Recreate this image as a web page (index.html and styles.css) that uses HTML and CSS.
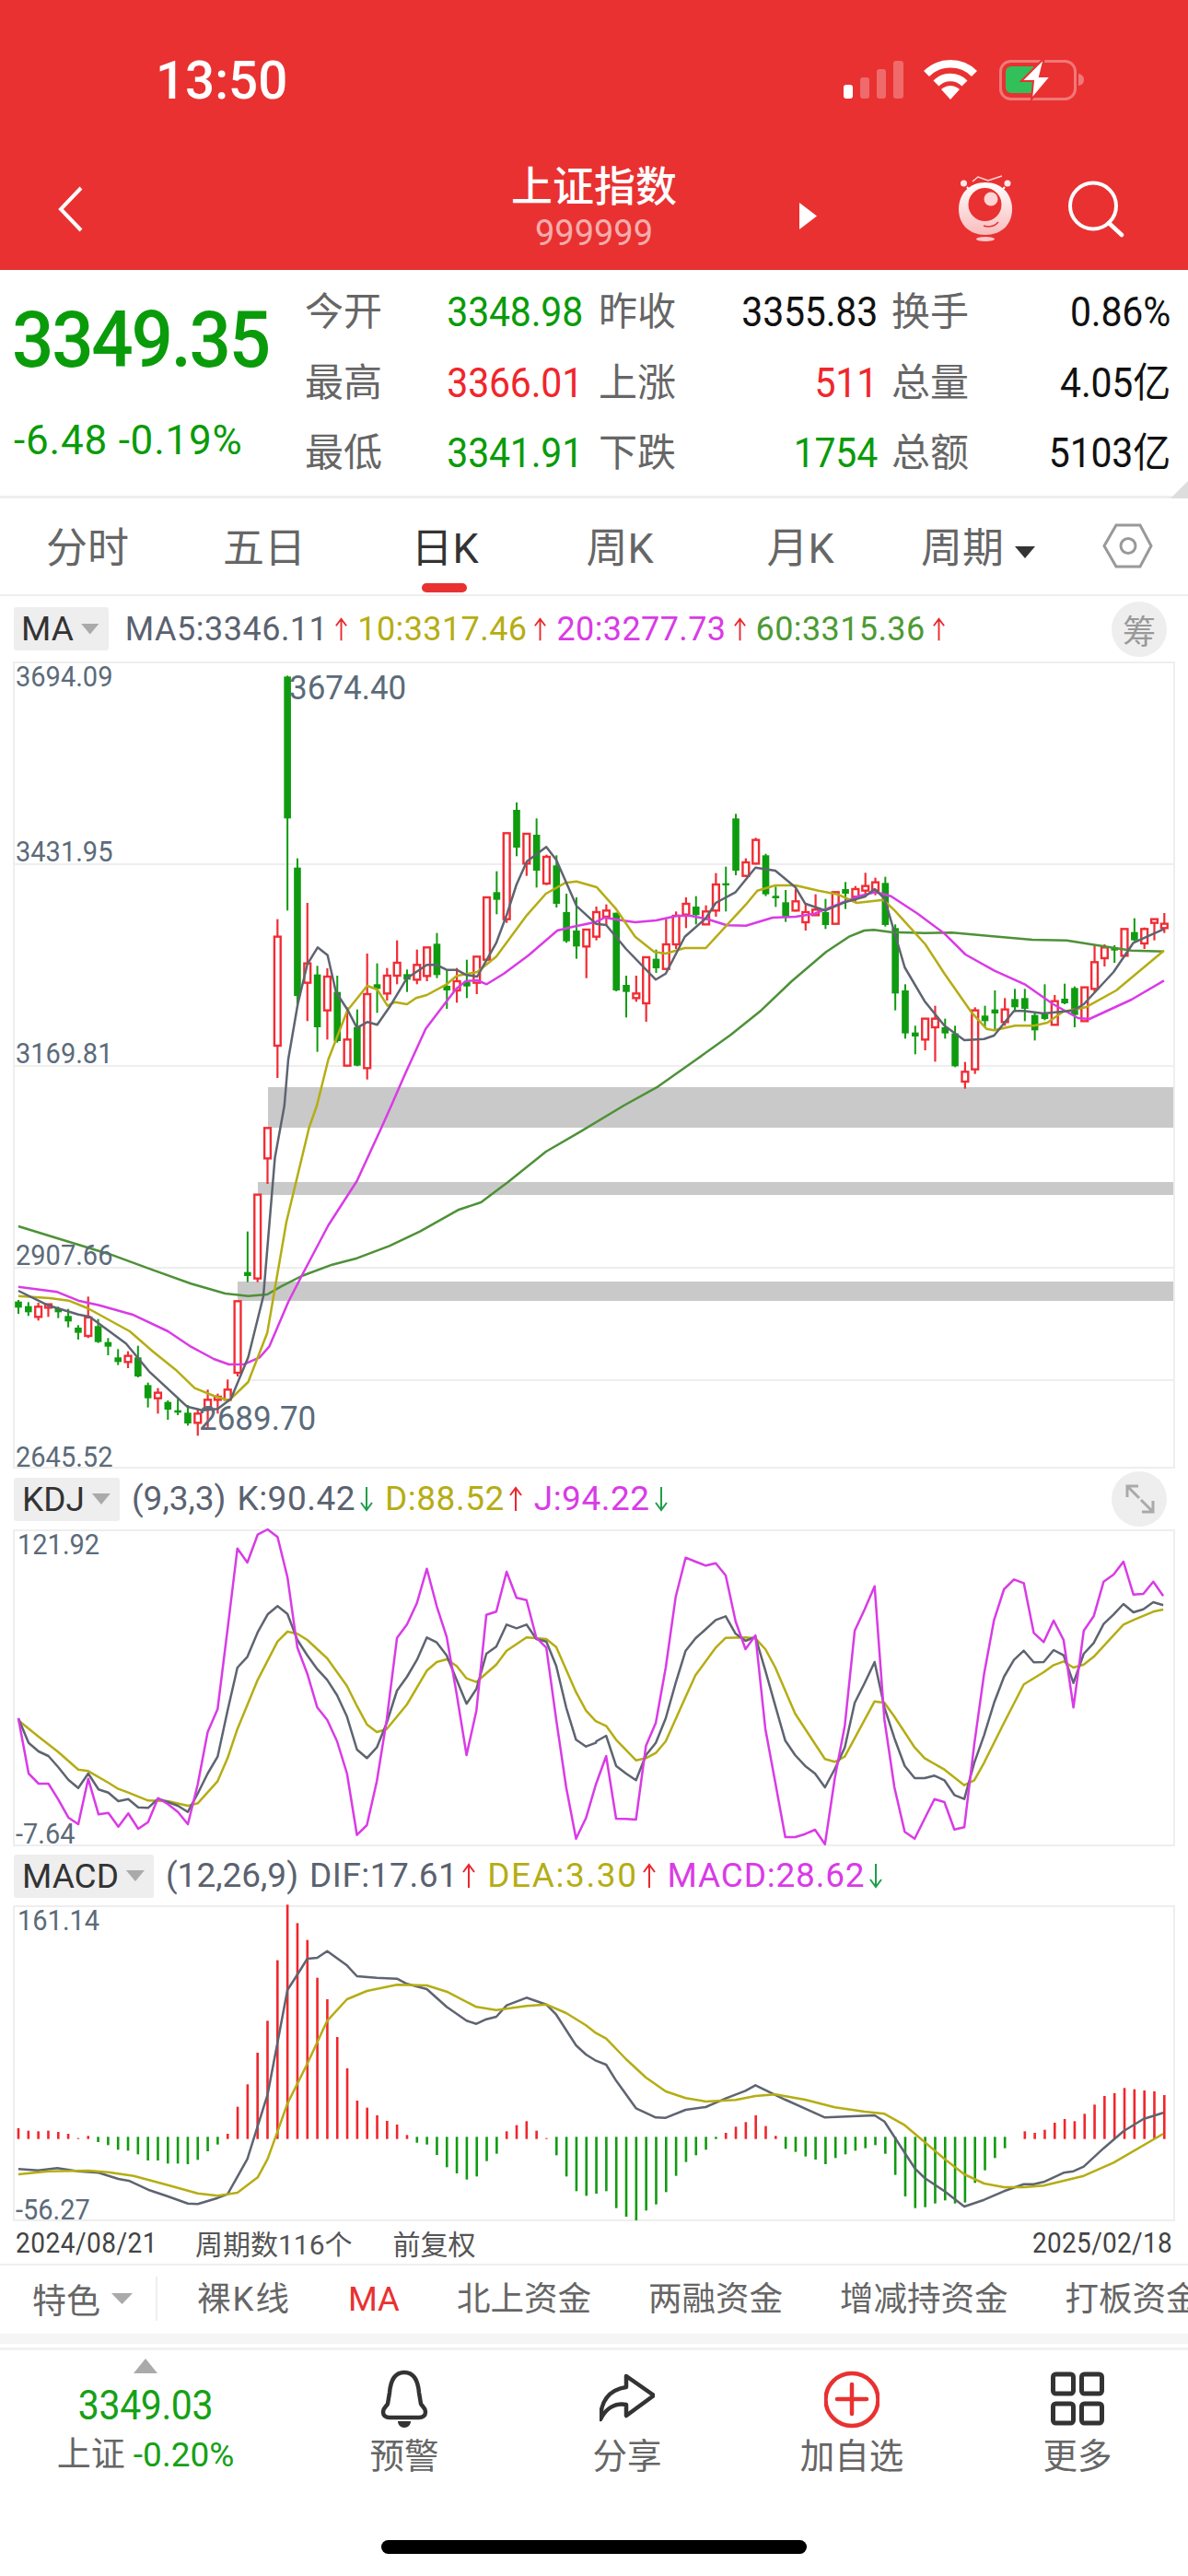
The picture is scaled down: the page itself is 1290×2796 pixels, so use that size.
FILE: index.html
```html
<!DOCTYPE html>
<html lang="zh">
<head>
<meta charset="utf-8">
<title>上证指数</title>
<link rel="stylesheet" href="styles.css">
</head>
<body>
<svg class="defs" width="0" height="0">
  <symbol id="arr-up" viewBox="0 0 16 28"><path d="M8 27V2M2 10l6-8 6 8" fill="none" stroke="#e9282e" stroke-width="2"/></symbol>
  <symbol id="arr-down" viewBox="0 0 16 28"><path d="M8 1v25M2 18l6 8 6-8" fill="none" stroke="#1f9e4a" stroke-width="2"/></symbol>
</svg>
<div class="page">
<header class="header">
  <div class="statusbar">
    <span class="time">13:50</span>
    <svg class="status-icons" viewBox="910 60 270 52" width="270" height="52">
      <rect x="916" y="92" width="10" height="15" rx="3" fill="#fff"/>
      <rect x="934" y="84" width="10" height="23" rx="3" fill="#fff" opacity=".28"/>
      <rect x="952" y="75" width="10" height="32" rx="3" fill="#fff" opacity=".28"/>
      <rect x="970" y="66" width="11" height="41" rx="3" fill="#fff" opacity=".28"/>
      <path d="M1006 80a37 37 0 0 1 52 0M1016.5 90.5a22 22 0 0 1 31 0" fill="none" stroke="#fff" stroke-width="8.5"/>
      <path d="M1022 97q10-8 20 0l-10 11z" fill="#fff"/>
      <rect x="1086.5" y="66.5" width="81" height="41" rx="11" fill="none" stroke="#fff" stroke-opacity=".35" stroke-width="3"/>
      <path d="M1171 80q6 1 6 6.5t-6 6.5z" fill="#fff" fill-opacity=".35"/>
      <path d="M1092 78a6 6 0 0 1 6-6h24v29h-24a6 6 0 0 1-6-6z" fill="#32c05a"/>
      <path d="M1134 63l-25 25h13l-2 20 21-25h-12z" fill="#fff" stroke="#e93131" stroke-width="2"/>
    </svg>
  </div>
  <nav class="navbar">
    <svg class="back" viewBox="60 198 34 58" width="34" height="58"><path d="M88 204L66 227l22 23" fill="none" stroke="#fff" stroke-width="4"/></svg>
    <div class="title-block">
      <div class="title">上证指数</div>
      <div class="code">999999</div>
    </div>
    <span class="next"></span>
    <svg class="mascot" viewBox="1038 188 64 76" width="64" height="76">
      <defs><linearGradient id="egg" x1="0" y1="0" x2="0" y2="1"><stop offset="0" stop-color="#fff"/><stop offset="1" stop-color="#f8bcbc"/></linearGradient></defs>
      <path d="M1056 197l6-5 11 4 15-5" fill="none" stroke="#ffd9d9" stroke-width="1.5"/>
      <path d="M1050 203l6 7M1091 203l-6 7" stroke="#fff" stroke-width="2"/>
      <circle cx="1046.5" cy="199" r="3.5" fill="#ffe6e6"/><circle cx="1094" cy="199" r="3.5" fill="#ffe6e6"/>
      <path d="M1070 198c18 0 29 13 29 29 0 17-12 28-29 28s-29-11-29-28c0-16 11-29 29-29z" fill="url(#egg)"/>
      <circle cx="1069.5" cy="222" r="18" fill="#e93131"/>
      <circle cx="1076" cy="216" r="7.5" fill="#ffd4d4"/>
      <path d="M1068 245q10 3 16-4" fill="none" stroke="#e93131" stroke-width="1.5"/>
      <ellipse cx="1070" cy="259.5" rx="10" ry="2.5" fill="#f9c7c7"/>
    </svg>
    <svg class="search" viewBox="1155 192 70 68" width="70" height="68"><circle cx="1187" cy="223.5" r="25" fill="none" stroke="#fff" stroke-width="4"/><path d="M1204 242l14 13" stroke="#fff" stroke-width="4.5" stroke-linecap="round"/></svg>
  </nav>
</header>

<section class="quote">
  <div class="quote-main">
    <div class="price">3349.35</div>
    <div class="change">-6.48 -0.19%</div>
  </div>
  <div class="quote-grid">
    <span class="lbl">今开</span><span class="val green">3348.98</span>
    <span class="lbl">昨收</span><span class="val black">3355.83</span>
    <span class="lbl">换手</span><span class="val black">0.86%</span>
    <span class="lbl">最高</span><span class="val red">3366.01</span>
    <span class="lbl">上涨</span><span class="val red">511</span>
    <span class="lbl">总量</span><span class="val black">4.05亿</span>
    <span class="lbl">最低</span><span class="val green">3341.91</span>
    <span class="lbl">下跌</span><span class="val green">1754</span>
    <span class="lbl">总额</span><span class="val black">5103亿</span>
  </div>
  <span class="corner"></span>
</section>

<div class="tabs">
  <span class="tab">分时</span>
  <span class="tab">五日</span>
  <span class="tab active">日K</span>
  <span class="tab">周K</span>
  <span class="tab">月K</span>
  <span class="tab tab-more">周期<i class="caret dark"></i></span>
  <svg class="hex" viewBox="1197 568 56 52" width="56" height="52"><path d="M1199 593.5l13-22.5h26l12 22.5-12 22.5h-26z" fill="none" stroke="#999" stroke-width="3"/><circle cx="1225" cy="593.5" r="8" fill="none" stroke="#999" stroke-width="3"/></svg>
</div>

<div class="legend legend-ma">
  <span class="pick">MA<i class="caret"></i></span>
  <span class="item c-gray">MA5:3346.11</span><svg class="arr"><use href="#arr-up"/></svg>
  <span class="item c-olive">10:3317.46</span><svg class="arr"><use href="#arr-up"/></svg>
  <span class="item c-mag">20:3277.73</span><svg class="arr"><use href="#arr-up"/></svg>
  <span class="item c-green">60:3315.36</span><svg class="arr"><use href="#arr-up"/></svg>
  <span class="round">筹</span>
</div>
<div class="plot plot-main" id="main">
  <span class="yl a1">3694.09</span>
  <span class="yl a2">3431.95</span>
  <span class="yl a3">3169.81</span>
  <span class="yl a4">2907.66</span>
  <span class="yl a5">2645.52</span>
  <span class="mark m1">3674.40</span>
  <span class="mark m2">2689.70</span>
</div>

<div class="legend legend-kdj">
  <span class="pick">KDJ<i class="caret"></i></span>
  <span class="item param c-gray">(9,3,3)</span>
  <span class="item c-gray gap">K:90.42</span><svg class="arr"><use href="#arr-down"/></svg>
  <span class="item c-olive">D:88.52</span><svg class="arr"><use href="#arr-up"/></svg>
  <span class="item c-mag">J:94.22</span><svg class="arr"><use href="#arr-down"/></svg>
  <span class="round"><svg viewBox="1206 1600 60 57" width="60" height="57"><path d="M1223 1626v-12h12M1224 1615l12 12M1251 1630v12h-12M1250 1641l-12-12" fill="none" stroke="#aaa" stroke-width="3"/></svg></span>
</div>
<div class="plot plot-kdj" id="kdj">
  <span class="yl b1">121.92</span>
  <span class="yl b2">-7.64</span>
</div>

<div class="legend legend-macd">
  <span class="pick">MACD<i class="caret"></i></span>
  <span class="item param c-gray">(12,26,9)</span>
  <span class="item c-gray gap">DIF:17.61</span><svg class="arr"><use href="#arr-up"/></svg>
  <span class="item c-olive">DEA:3.30</span><svg class="arr"><use href="#arr-up"/></svg>
  <span class="item c-mag">MACD:28.62</span><svg class="arr"><use href="#arr-down"/></svg>
</div>
<div class="plot plot-macd" id="macd">
  <span class="yl b1">161.14</span>
  <span class="yl b2">-56.27</span>
</div>

<div class="dates">
  <span class="date-start">2024/08/21</span>
  <span class="count">周期数116个</span>
  <span class="adj">前复权</span>
  <span class="date-end">2025/02/18</span>
</div>

<div class="tools">
  <span class="feature">特色<i class="caret"></i></span>
  <span class="tool-list">
    <span class="tool wide">裸K线</span>
    <span class="tool on">MA</span>
    <span class="tool">北上资金</span>
    <span class="tool">两融资金</span>
    <span class="tool">增减持资金</span>
    <span class="tool">打板资金</span>
  </span>
</div>
<div class="strip"></div>

<footer class="bottom">
  <div class="bottom-grid">
    <div class="ticker">
      <i class="up"></i>
      <div class="ticker-val">3349.03</div>
      <div class="ticker-label">上证 <b>-0.20%</b></div>
    </div>
    <div class="action">
      <svg viewBox="409 2570 60 70" width="60" height="70"><path d="M439 2575c-11 0-15 10-16 22l-2 12c-1 3-5 4-5 9 0 4 3 6 7 6h32c4 0 7-2 7-6 0-5-4-6-5-9l-2-12c-1-12-5-22-16-22z" fill="none" stroke="#333" stroke-width="4.5"/><path d="M432 2628h14c0 4-3 7-7 7s-7-3-7-7z" fill="#333"/></svg>
      <span>预警</span>
    </div>
    <div class="action">
      <svg viewBox="651 2570 60 70" width="60" height="70"><path d="M680 2579l30 21-30 22v-12c-12-2-22 4-28 16 0-18 8-32 28-35z" fill="none" stroke="#333" stroke-width="4.5" stroke-linejoin="round"/></svg>
      <span>分享</span>
    </div>
    <div class="action">
      <svg viewBox="895 2570 60 70" width="60" height="70"><circle cx="925" cy="2604.5" r="28.5" fill="none" stroke="#e93131" stroke-width="4.5"/><path d="M909 2604h32M925 2588v32" stroke="#e93131" stroke-width="4.5" stroke-linecap="round"/></svg>
      <span>加自选</span>
    </div>
    <div class="action">
      <svg viewBox="1138 2570 60 70" width="60" height="70"><g fill="none" stroke="#333" stroke-width="5"><rect x="1141.5" y="2577" width="22" height="21" rx="3"/><rect x="1172.5" y="2577" width="22" height="21" rx="3"/><rect x="1141.5" y="2609" width="22" height="21" rx="3"/><rect x="1172.5" y="2609" width="22" height="21" rx="3"/></g></svg>
      <span>更多</span>
    </div>
  </div>
  <div class="home"></div>
</footer>
</div>
<script src="chart.js"></script>
</body>
</html>
```
FILE: styles.css
```css
* { box-sizing: border-box; }
html, body { margin: 0; padding: 0; background: #fff; }
body { font-family: Roboto, "Noto Sans CJK SC", sans-serif; }
.defs { position: absolute; }
.page { width: 1290px; height: 2796px; overflow: hidden; }

.header { height: 293px; background: #e93131; color: #fff; }
.statusbar { height: 130px; padding-top: 60px; display: flex; align-items: flex-start; }
.time { margin-left: 169px; width: 741px; font-size: 56.5px; line-height: 56px; font-weight: 500; }
.status-icons { display: block; }
.navbar { height: 163px; display: flex; align-items: flex-start; }
.back { margin: 68px 0 0 60px; }
.title-block { margin-left: 461px; width: 180px; margin-top: 49px; text-align: center; }
.title { font-size: 45px; line-height: 50px; font-weight: 500; white-space: nowrap; }
.code { margin-top: 4px; font-size: 38px; line-height: 40px; opacity: .6; }
.next { margin: 90px 0 0 133px; width: 19px; height: 29px; background: #fff; clip-path: polygon(0 0, 100% 50%, 0 100%); }
.mascot { margin: 58px 0 0 151px; }
.search { margin: 62px 0 0 53px; }

.quote { position: relative; height: 248px; border-bottom: 3px solid #eeeeee; display: flex; }
.quote-main { width: 331px; padding-left: 13px; color: #0a9b0a; }
.price { margin-top: 36px; font-size: 80px; line-height: 80px; font-weight: 500; letter-spacing: -2.3px; transform: scaleY(1.06); }
.change { margin-top: 47px; margin-left: 2px; font-size: 44px; line-height: 44px; letter-spacing: .8px; white-space: nowrap; }
.quote-grid { margin-top: 8px; display: grid; height: 230px; grid-template-columns: 84px 218px 101px 219px 99px 219px; grid-auto-rows: 76.5px; align-items: center; }
.lbl { font-size: 42px; line-height: 44px; color: #666; text-align: right; white-space: nowrap; }
.val { font-size: 41px; line-height: 44px; text-align: right; letter-spacing: -.2px; white-space: nowrap; transform: scaleY(1.08); }
.green { color: #0a9b0a; }
.red { color: #f0262c; }
.black { color: #111; }
.corner { position: absolute; right: 0; bottom: -3px; width: 19px; height: 19px; background: #dddddd; clip-path: polygon(100% 0, 100% 100%, 0 100%); }

.tabs { height: 106px; padding-top: 6px; border-bottom: 2px solid #eeeeee; display: grid; grid-template-columns: 190px 194px 198px 182px 210px 174px 1fr; align-items: center; }
.tab { position: relative; text-align: center; font-size: 45px; line-height: 50px; color: #666; }
.tab.active { color: #333; }
.tab.active::after { content: ""; position: absolute; left: 74px; bottom: -22px; width: 49px; height: 10px; border-radius: 5px; background: #e93131; }
.tab-more { text-align: left; padding-left: 26px; white-space: nowrap; }
.caret { display: inline-block; width: 22px; height: 13px; background: #aaa; clip-path: polygon(0 0, 100% 0, 50% 100%); }
.caret.dark { background: #333; margin-left: 12px; vertical-align: 5px; }
.hex { margin: -6px 0 0 49px; display: block; }

.legend { display: flex; align-items: center; padding-left: 15px; white-space: nowrap; font-size: 36px; }
.legend-ma { height: 71px; }
.legend-kdj { height: 66px; font-size: 37px; }
.legend-macd { height: 64px; font-size: 37px; }
.pick { height: 47px; display: flex; align-items: center; gap: 8px; padding: 0 10px 0 8px; background: #eeeeee; border-radius: 3px; font-size: 37px; color: #333; margin-right: 18px; }
.legend-kdj .pick, .legend-macd .pick { padding-left: 9px; margin-right: 13px; }
.pick .caret { width: 20px; height: 12px; }
.item { line-height: 40px; letter-spacing: .5px; }
.legend-ma .item { letter-spacing: .4px; }
.legend-ma .c-gray { letter-spacing: .5px; }
.item.param { letter-spacing: 0; }
.item.gap { margin-left: 12px; }
.arr { width: 15px; height: 28px; margin: 0 10px 0 7px; flex: none; }
.legend-kdj .arr, .legend-macd .arr { width: 16px; margin: 0 12px 0 4px; }
.legend-macd .c-olive { letter-spacing: 1.6px; }
.legend-macd .c-mag { letter-spacing: .8px; }
.c-gray { color: #5a6270; }
.c-olive { color: #b5ad14; }
.c-mag { color: #d93be6; }
.c-green { color: #4d9a34; }
.round { position: absolute; left: 1207px; width: 60px; height: 60px; border-radius: 50%; background: #eeeeee; color: #999; font-size: 36px; display: flex; align-items: center; justify-content: center; }

.plot { position: relative; margin-left: 14px; width: 1262px; border: 2px solid #eeeeee; }
.plot svg { position: absolute; left: 0; top: 0; overflow: visible; }
.plot-main { height: 876px; }
.plot-kdj { height: 344px; }
.plot-macd { height: 343px; }
.yl { position: absolute; left: 1px; font-size: 29px; line-height: 30px; color: #5b6b7a; z-index: 1; transform: scaleY(1.06); }
.a1 { top: -1px; }
.a2 { top: 189px; }
.a3 { top: 408px; }
.a4 { top: 627px; }
.a5 { top: 846px; }
.b1 { top: -1px; left: 3px; }
.b2 { top: 313px; }
.mark { position: absolute; font-size: 35px; line-height: 36px; color: #5b6b7a; z-index: 1; transform: scaleY(1.06); }
.m1 { left: 298px; top: 9px; }
.m2 { left: 200px; top: 802px; }

.dates { position: relative; height: 48px; border-bottom: 2px solid #eeeeee; display: flex; align-items: center; color: #444; font-size: 28px; white-space: nowrap; }
.date-start { margin-left: 17px; letter-spacing: .5px; transform: scaleY(1.15); }
.count { margin-left: 41px; font-size: 30px; color: #555; }
.adj { margin-left: 44px; font-size: 30px; color: #555; }
.date-end { position: absolute; right: 17px; letter-spacing: .3px; transform: scaleY(1.15); }

.tools { height: 74px; display: flex; align-items: center; white-space: nowrap; overflow: hidden; color: #666; font-size: 36.5px; }
.feature { flex: none; width: 171px; height: 48px; margin-top: -2px; padding-left: 35px; border-right: 2px solid #eeeeee; display: flex; align-items: center; font-size: 37px; }
.feature .caret { margin-left: 12px; width: 23px; height: 12px; }
.tool-list { flex: none; margin-left: 43px; display: flex; align-items: baseline; gap: 62px; line-height: 44px; }
.tool { flex: none; }
.tool.wide { letter-spacing: 2px; }
.tool.on { color: #e93131; }
.strip { height: 11px; background: #f5f5f5; margin-bottom: 4px; }

.bottom { border-top: 3px solid #f1f1f1; }
.bottom-grid { display: grid; grid-template-columns: 316px 246px 238px 250px 240px; height: 137px; }
.ticker { display: flex; flex-direction: column; align-items: center; padding-top: 9px; }
.up { display: block; width: 26px; height: 16px; background: #aaa; clip-path: polygon(50% 0, 100% 100%, 0 100%); }
.ticker-val { margin-top: 13px; font-size: 41px; line-height: 44px; color: #16a016; letter-spacing: -.4px; transform: scaleY(1.08); }
.ticker-label { margin-top: 10px; font-size: 37px; line-height: 44px; color: #666; white-space: nowrap; }
.ticker-label b { font-weight: 400; color: #16a016; }
.action { display: flex; flex-direction: column; align-items: center; padding-top: 19px; }
.action span { margin-top: 4px; font-size: 37.5px; line-height: 44px; color: #666; }
.home { width: 462px; height: 15px; margin: 69px 0 0 414px; border-radius: 8px; background: #000; }
```
FILE: chart.js
```js
const NS = 'http://www.w3.org/2000/svg';
const X = i => 20 + 10.82 * i;
const SX = 1568 / 650;
const C = { gray: '#5e6470', olive: '#b5ad14', mag: '#d93be6', ma60: '#4e9138', red: '#f22c34', green: '#0f9b10' };

function surface(id) {
  const host = document.getElementById(id);
  const r = host.getBoundingClientRect();
  const svg = document.createElementNS(NS, 'svg');
  const l = r.left + 2, t = r.top + 2, w = r.width - 4, h = r.height - 4;
  svg.setAttribute('viewBox', l + ' ' + t + ' ' + w + ' ' + h);
  svg.setAttribute('width', w);
  svg.setAttribute('height', h);
  host.insertBefore(svg, host.firstChild);
  return svg;
}
function el(svg, name, attrs) {
  const n = document.createElementNS(NS, name);
  for (const k in attrs) n.setAttribute(k, attrs[k]);
  svg.appendChild(n);
  return n;
}
function rect(svg, x, y, w, h, fill) { el(svg, 'rect', { x, y, width: w, height: h, fill }); }
// points were read from crops: x is stretched by SX, y by 3
function crop(ox, oy, flat) {
  const out = [];
  for (let i = 0; i < flat.length; i += 2) out.push((ox + flat[i] / SX).toFixed(1) + ',' + (oy + flat[i + 1] / 3).toFixed(1));
  return out;
}
function line(svg, color, width, ...segs) {
  el(svg, 'polyline', { points: segs.flat().join(' '), fill: 'none', stroke: color, 'stroke-width': width, 'stroke-linejoin': 'round' });
}
const LW = 2.5;

/* ---------- main chart ---------- */
const main = surface('main');
[[937, 16], [1156, 16], [1375, 16], [1497, 270]].forEach(g => rect(main, g[1], g[0], 1274 - g[1], 2, '#eeeeee'));
rect(main, 291, 1180, 983, 44, '#c9c9c9');
rect(main, 280, 1283, 994, 14, '#c9c9c9');
rect(main, 258, 1391, 1016, 21, '#c9c9c9');

// [rising, bodyTop, bodyBottom, wickTop, wickBottom]
const early = [
[0,668,688,663,708],[0,683,703,670,715],[1,685,718,672,730],[1,677,688,675,718],[0,690,703,685,722],[0,715,733,692,752],
[0,753,770,745,792],[1,720,780,652,787],[0,748,800,725,803],[0,800,815,787,843],[0,850,865,823,875],[1,845,865,830,885],
[0,850,912,812,915],[0,940,983,932,1013],[1,965,983,950,1033],[0,995,1020,990,1053],[0,1022,1030,985,1038],[0,1030,1065,1005,1072],
[1,1033,1063,1020,1105],[1,988,1018,955,1080],[1,978,988,968,1033],[1,955,988,922,995],[1,667,900,667,912],[0,572,585,440,605],
[1,320,593,320,605],[1,103,202,103,285]];
const later = [
[1,950,1305,893,1410],[0,103,565,100,865],[0,725,1143,695,1170],[1,1037,1100,840,1225],[0,1073,1245,1045,1325],[1,1080,1190,1053,1285],
[0,1130,1290,1077,1295],[1,1285,1370,1180,1372],[0,1245,1370,1187,1372],[1,1137,1378,1005,1415],[0,1105,1120,1037,1198],[1,1077,1135,1052,1158],
[1,1035,1077,962,1105],[0,1072,1090,1057,1130],[1,1042,1090,992,1105],[1,985,1078,985,1095],[0,973,1075,938,1085],[0,1110,1125,1060,1185],
[1,1095,1125,1052,1165],[0,1098,1112,1025,1150],[1,1015,1100,1015,1137],[1,822,1025,822,1030],[0,805,830,737,877],[1,613,893,613,905],
[0,537,660,513,688],[1,615,712,615,752],[0,618,735,565,790],[1,690,777,683,782],[0,718,843,685,855],[0,870,965,810,970],
[0,930,982,822,1022],[1,927,982,927,1085],[1,870,950,852,962],[1,865,885,845,915],[0,872,1125,872,1128],[0,1107,1130,1077,1213],
[1,1135,1150,1077,1162],[1,1017,1167,1017,1227],[0,1022,1053,992,1068],[1,975,1055,893,1058],[1,882,975,868,990],[1,843,878,822,922],
[0,852,880,818,910],[1,868,910,848,912],[1,780,865,743,885],[0,776,783,722,868],[0,565,735,550,750],[1,708,752,695,755],
[1,635,712,628,715],[0,685,812,680,818],[0,817,825,787,853],[0,838,885,798,902],[1,835,865,795,868],[1,870,903,843,930],
[1,862,880,812,882],[0,870,912,827,925],[1,805,908,805,910],[0,795,810,772,860],[1,795,820,785,840],[1,785,800,742,822],
[1,773,800,758,815],[0,775,912,755,917],[0,922,1135,910,1190],[0,1125,1265,1105,1282],[0,1262,1275,1240,1333],[1,1217,1285,1217,1320],
[1,1217,1245,1175,1357],[0,1245,1265,1217,1282],[0,1265,1372,1240,1375],[1,1390,1422,1358,1445],[1,1190,1382,1180,1397],[0,1207,1225,1175,1245],
[0,1187,1200,1125,1253],[1,1187,1228,1150,1240],[0,1153,1180,1120,1195],[0,1150,1185,1120,1225],[0,1205,1255,1200,1288],[0,1203,1218,1105,1222],
[1,1160,1237,1140,1238],[0,1152,1167,1103,1170],[0,1117,1205,1112,1245],[1,1115,1225,1115,1227],[1,1033,1120,975,1130],[1,985,1020,975,1047],
[0,985,995,978,1035],[1,925,1012,925,1015],[0,935,962,890,965],[1,925,972,920,990],[1,893,905,893,962],[1,908,922,873,938]];
const candle = (d, i, base) => {
  const x = X(i), top = base + d[1] / 3, bot = base + d[2] / 3, wt = base + d[3] / 3, wb = base + d[4] / 3;
  if (d[0]) {
    if (wt < top) rect(main, x - 1.1, wt, 2.2, top - wt, C.red);
    if (wb > bot) rect(main, x - 1.1, bot, 2.2, wb - bot, C.red);
    el(main, 'rect', { x: x - 3.4, y: top, width: 6.8, height: Math.max(bot - top, 2), fill: '#fff', stroke: C.red, 'stroke-width': 2.4 });
  } else {
    rect(main, x - 1, wt, 2, wb - wt, C.green);
    rect(main, x - 3.8, top, 7.6, Math.max(bot - top, 2), C.green);
  }
};
early.forEach((d, i) => candle(d, i, 1190));
later.forEach((d, i) => candle(d, i + 26, 700));

line(main, C.ma60, LW,
  crop(0, 1190, [48,423,150,462,290,515,400,565,500,610,590,642,650,650,700,645,735,620,790,585,870,548,935,527,1020,487,1100,440,1200,370,1260,345,1330,280,1430,180,1520,115]),
  crop(640, 700, [90,1500,180,1438,280,1350,370,1270,450,1190,530,1095,620,1000,680,950,720,930,745,928,790,935,880,938,950,937,1050,948,1160,960,1250,962,1330,978,1420,995,1505,998]));
line(main, C.mag, LW,
  crop(0, 1190, [48,620,150,637,205,665,260,680,350,712,440,765,500,815,560,855,600,873,640,872,680,850,705,815,755,670,790,585,860,420,935,275,1000,100]),
  crop(0, 700, [1025,1500,1060,1400,1115,1250,1170,1160,1195,1120,1220,1095,1250,1092,1275,1105,1320,1070,1385,1010,1460,930,1500,918,1561,902]),
  crop(640, 700, [40,888,90,898,120,903,175,897,230,882,265,882,310,893,360,913,410,914,480,888,540,885,590,875,640,850,700,820,750,805,790,818,860,875,930,940,985,1008,1060,1060,1140,1105,1215,1170,1280,1215,1310,1218,1420,1155,1505,1093]));
line(main, C.olive, LW,
  crop(0, 1190, [48,650,130,657,180,665,230,690,340,765,400,830,460,890,510,950,560,975,600,990,650,930,700,770,750,410,810,100]),
  crop(0, 700, [830,1500,860,1350,910,1190,962,1110,988,1122,1015,1175,1035,1163,1066,1170,1090,1150,1118,1140,1170,1105,1196,1078,1250,1065,1300,1015,1380,880,1430,810,1480,775,1510,770,1561,788]),
  crop(640, 700, [20,790,70,860,120,950,170,1000,200,1005,250,987,305,987,410,845,440,800,487,783,540,783,600,800,650,812,700,840,770,830,800,865,880,975,930,1070,1000,1195,1040,1250,1060,1255,1115,1240,1165,1240,1200,1230,1240,1195,1300,1180,1380,1125,1505,995]));
line(main, C.gray, LW,
  crop(0, 1190, [48,633,125,680,205,710,235,718,330,805,390,895,490,1010,530,1022,570,1018,605,985,650,850,690,650,720,200]),
  crop(0, 700, [745,1500,755,1350,780,1170,805,1040,832,985,858,1010,880,1130,910,1187,935,1247,962,1228,988,1237,1020,1180,1066,1085,1118,1042,1144,1042,1170,1058,1196,1058,1222,1075,1250,1080,1300,970,1327,880,1353,780,1380,705,1431,658,1457,700,1510,850,1561,908]),
  crop(640, 700, [44,912,96,990,174,1090,200,1070,250,950,305,890,331,840,383,805,435,725,487,735,540,790,565,842,617,865,669,838,721,820,747,795,773,825,826,1050,878,1160,930,1240,982,1287,1034,1283,1060,1272,1112,1192,1138,1192,1190,1200,1268,1190,1295,1170,1373,1065,1425,970,1505,925]));

/* ---------- KDJ ---------- */
const kdj = surface('kdj');
line(kdj, C.olive, LW,
  crop(0, 1600, [48,802,101,855,153,905,205,962,231,967,284,1005,310,1025,336,1037,388,1063,440,1065,492,1080,518,1072,570,1000,596,925,622,830,675,670,727,545,753,513,779,520,805,540,857,600,909,690,935,755,961,815,987,840,1013,830,1066,750,1118,640,1144,612,1170,603,1196,625,1222,665,1248,677,1300,620,1327,575,1379,532,1431,537,1457,563,1509,710,1535,770,1561,805]),
  crop(640, 1600, [18,805,44,820,70,865,122,932,148,925,174,908,200,870,252,725,278,655,331,565,357,533,409,532,435,535,461,570,487,630,539,780,617,928,643,937,669,920,695,860,747,740,773,745,799,790,852,890,878,925,930,962,982,1013,1008,997,1034,940,1086,810,1138,685,1190,645,1216,622,1242,610,1268,630,1295,620,1321,595,1399,490,1425,475,1477,448,1503,441]));
line(kdj, C.gray, LW,
  crop(0, 1600, [48,795,75,875,101,903,127,918,153,955,179,995,205,1022,231,975,258,1027,284,1037,310,1065,336,1058,362,1085,388,1087,414,1057,440,1068,466,1080,492,1100,518,1040,544,975,570,920,596,770,622,630,648,595,675,515,701,457,727,430,753,455,779,540,805,590,831,635,857,670,883,720,909,790,935,897,961,925,987,890,1013,810,1040,705,1066,660,1092,605,1118,532,1144,548,1170,590,1196,670,1222,748,1248,700,1274,585,1300,562,1327,490,1353,502,1379,490,1405,537,1431,545,1457,625,1483,760,1509,865,1535,887,1561,875]),
  crop(640, 1600, [18,870,44,852,70,950,96,975,122,997,148,915,174,875,200,795,226,680,252,575,278,535,305,505,331,475,357,463,383,520,409,543,435,530,461,640,487,755,513,868,539,915,565,950,591,975,617,1020,643,960,669,890,695,745,721,680,747,612,773,760,799,860,826,950,852,990,878,990,904,982,930,997,956,1045,982,1058,1008,940,1034,850,1060,745,1086,660,1112,605,1138,575,1164,613,1190,612,1216,573,1242,590,1268,680,1295,585,1321,550,1347,488,1373,457,1399,423,1425,450,1451,440,1477,417,1503,427]));
line(kdj, C.mag, LW,
  crop(0, 1600, [48,795,75,975,101,1008,127,1008,153,1060,179,1118,205,1140,231,992,258,1108,284,1103,310,1148,336,1105,362,1155,388,1133,414,1055,440,1075,466,1100,492,1140,518,1010,544,840,570,765,596,505,622,242,648,288,675,197,701,180,727,205,753,335,779,565,805,650,831,760,857,800,883,870,909,975,935,1175,961,1143,987,1000,1013,800,1040,533,1066,490,1092,420,1118,308,1144,430,1170,530,1196,715,1222,915,1248,770,1274,458,1300,448,1327,318,1353,403,1379,410,1405,533,1431,565,1457,800,1483,1020,1509,1187,1535,1120,1561,1010]),
  crop(640, 1600, [44,918,70,1122,96,1123,122,1125,148,885,174,810,200,630,226,400,252,272,278,285,305,298,331,290,357,330,383,480,409,570,435,525,461,830,487,1005,513,1182,539,1182,565,1172,591,1158,617,1205,643,990,669,820,695,510,721,440,747,365,773,800,799,1020,826,1165,852,1187,878,1122,904,1058,930,1068,956,1157,982,1150,1008,880,1034,650,1060,475,1086,375,1112,343,1138,355,1164,517,1190,547,1216,477,1242,540,1268,760,1295,510,1321,463,1347,350,1373,327,1399,285,1425,392,1451,390,1477,350,1503,397]));

/* ---------- MACD ---------- */
const macd = surface('macd');
const hist = [900,908,910,908,912,918,932,925,945,955,970,973,985,1005,1005,1015,1015,1017,1003,975,953,918,830,757,654,550,353,172,232,287,410,480,603,705,810,833,858,876,888,922,947,953,987,1027,1047,1067,1057,1007,983,910,890,877,908,932,988,1057,1105,1120,1113,1105,1160,1188,1200,1168,1148,1108,1055,1010,988,970,935,915,895,880,858,893,925,967,977,992,1002,1017,997,985,973,965,955,983,1052,1122,1160,1157,1145,1135,1145,1142,1078,1037,997,965,null,910,915,905,882,870,877,853,823,795,786,769,773,777,780,792];
hist.forEach((v, i) => {
  if (v === null) return;
  const y = 2010 + v / 3;
  if (v <= 932) rect(macd, X(i) - 1.3, y, 2.6, 2010 + 935 / 3 - y, '#f0262c');
  else rect(macd, X(i) - 1.3, 2010 + 928 / 3, 2.6, y - (2010 + 928 / 3), '#119a11');
});
line(macd, C.gray, LW,
  crop(0, 2010, [48,1033,100,1037,150,1030,205,1040,258,1045,310,1065,340,1072,388,1100,440,1122,492,1145,518,1147,570,1127,596,1115,648,1000,701,790,727,620,753,450,779,400,805,348,831,345,857,323,909,370,935,405,987,410,1040,413,1066,430,1118,447,1170,505,1222,550,1248,560,1274,545,1300,537,1327,500,1379,475,1431,497,1457,530,1509,630,1535,660,1561,680]),
  crop(640, 2010, [44,693,70,745,122,835,174,865,200,866,252,840,305,831,357,803,409,778,435,760,513,807,617,865,747,858,773,878,800,930,852,1030,878,1062,930,1105,982,1155,1034,1133,1086,1105,1138,1082,1164,1082,1190,1075,1242,1045,1268,1040,1295,1025,1347,965,1399,910,1451,870,1503,850]));
line(macd, C.olive, LW,
  crop(0, 2010, [48,1050,127,1040,231,1038,284,1043,350,1055,440,1085,518,1112,570,1120,622,1110,675,1060,701,1000,727,910,753,820,805,690,857,550,909,480,961,453,1040,433,1118,435,1170,455,1248,505,1300,515,1379,502,1431,497,1483,525,1535,565,1561,590]),
  crop(640, 2010, [44,608,96,675,148,735,200,780,252,802,305,813,383,808,435,795,487,790,565,807,643,832,721,846,773,853,826,890,878,945,930,1000,982,1050,1034,1080,1086,1092,1138,1092,1190,1087,1295,1055,1373,1012,1503,918]));
```
